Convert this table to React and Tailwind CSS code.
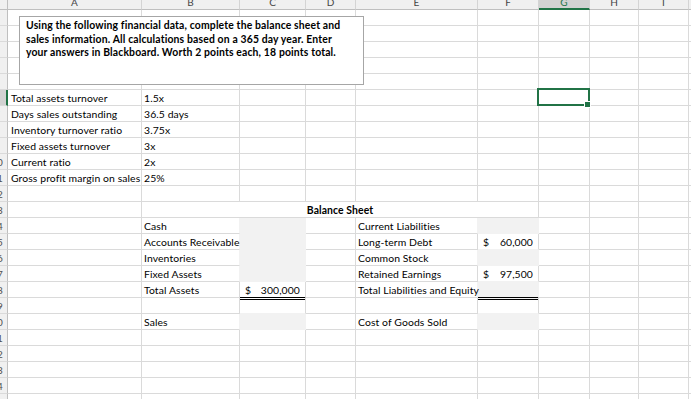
import React from 'react';

const COLS = [
  { k: 'A', w: 'w-[134px]' },
  { k: 'B', w: 'w-[98px]' },
  { k: 'C', w: 'w-[66px]' },
  { k: 'D', w: 'w-[50px]' },
  { k: 'E', w: 'w-[122px]' },
  { k: 'F', w: 'w-[61px]' },
  { k: 'G', w: 'w-[51px]' },
  { k: 'H', w: 'w-[49px]' },
  { k: 'I', w: 'w-[50px]' },
  { k: 'J', w: 'w-[60px]' },
];

const TEXT = {
  A6: 'Total assets turnover',
  B6: '1.5x',
  A7: 'Days sales outstanding',
  B7: '36.5 days',
  A8: 'Inventory turnover ratio',
  B8: '3.75x',
  A9: 'Fixed assets turnover',
  B9: '3x',
  A10: 'Current ratio',
  B10: '2x',
  A11: 'Gross profit margin on sales',
  B11: '25%',
  B14: 'Cash',
  E14: 'Current Liabilities',
  B15: 'Accounts Receivable',
  E15: 'Long-term Debt',
  B16: 'Inventories',
  E16: 'Common Stock',
  B17: 'Fixed Assets',
  E17: 'Retained Earnings',
  B18: 'Total Assets',
  E18: 'Total Liabilities and Equity',
  B20: 'Sales',
  E20: 'Cost of Goods Sold',
};

const MONEY = {
  C18: '300,000',
  F15: '60,000',
  F17: '97,500',
};

const FILLED = new Set(['C14', 'C15', 'C16', 'C17', 'C20', 'F14', 'F16', 'F18', 'F20']);
const DOUBLE = new Set(['C18', 'F18']);
const OVERFLOW = new Set(['A11', 'B15', 'E18']);

const isFilled = (c, r) => FILLED.has(c + r);

function RowHeader({ n, selected }) {
  return (
    <div
      className={
        'shrink-0 w-[8px] h-[16px] box-border border-b border-b-[#dadada] flex justify-end overflow-hidden ' +
        (selected ? 'bg-[#d2d2d2] border-r-2 border-r-[#217346]' : 'bg-[#f0f0f0] border-r border-r-[#bfbfbf]')
      }
    >
      <div className="shrink-0 w-[20px] text-center text-[10px] leading-[16px] text-[#505050]">{n}</div>
    </div>
  );
}

function Row({ r }) {
  const cells = [];
  for (let i = 0; i < COLS.length; i++) {
    const col = COLS[i];
    const key = col.k + r;

    if (r === 13 && col.k === 'B') {
      cells.push(
        <div
          key={key}
          className="shrink-0 w-[397px] h-[16px] box-border border-r border-b border-r-[#dadada] border-b-[#dadada] text-center font-bold text-[10.4px] tracking-[0.1px] leading-[16px] whitespace-nowrap text-black"
        >
          Balance Sheet
        </div>
      );
      continue;
    }
    if (r === 13 && ['C', 'D', 'E', 'F'].includes(col.k)) continue;

    const filled = isFilled(col.k, r);
    const next = COLS[i + 1];
    const rightFilled = filled || (next && isFilled(next.k, r));
    const bottomFilled = filled || isFilled(col.k, r + 1);
    const dbl = DOUBLE.has(key);

    let cls = 'shrink-0 box-border border-r ' + col.w + ' ';
    cls += rightFilled ? 'border-r-[#f2f2f2] ' : 'border-r-[#dadada] ';
    if (dbl) {
      cls += 'h-[18px] border-b-[3px] border-double border-b-black ';
    } else {
      cls += 'h-[16px] border-b ';
      cls += bottomFilled ? 'border-b-[#f2f2f2] ' : 'border-b-[#dadada] ';
    }
    if (filled) cls += 'bg-[#f2f2f2] ';
    if (OVERFLOW.has(key)) cls += 'relative z-10 ';

    let content = null;
    if (TEXT[key]) {
      content = (
        <div
          className={
            'whitespace-nowrap text-[10.4px] tracking-[0.1px] leading-[16px] text-black ' +
            (col.k === 'A' ? 'pl-[3px]' : 'pl-[2px]')
          }
        >
          {TEXT[key]}
        </div>
      );
    } else if (MONEY[key]) {
      content = (
        <div className="flex justify-between whitespace-nowrap text-[10.4px] tracking-[0.1px] leading-[16px] text-black pl-[5px] pr-[5px]">
          <span>$</span>
          <span>{MONEY[key]}</span>
        </div>
      );
    }

    cells.push(
      <div key={key} className={cls}>
        {content}
      </div>
    );
  }
  return (
    <div className="flex h-[16px] items-start">
      <RowHeader n={r} selected={r === 6} />
      {cells}
    </div>
  );
}

export default function App() {
  const rows = [];
  for (let r = 1; r <= 25; r++) rows.push(<Row key={r} r={r} />);

  return (
    <div className="relative w-[691px] h-[399px] overflow-hidden bg-white font-['Lato',sans-serif]">
      {/* column headers */}
      <div className="flex h-[10px]">
        <div className="shrink-0 w-[8px] h-[10px] box-border bg-[#f0f0f0] border-r border-b border-r-[#bfbfbf] border-b-[#bfbfbf]" />
        {COLS.map((c) => (
          <div
            key={c.k}
            className={
              'shrink-0 h-[10px] box-border border-r border-r-[#d4d4d4] overflow-hidden text-center text-[10px] leading-[5px] ' +
              c.w +
              ' ' +
              (c.k === 'G'
                ? 'bg-[#d2d2d2] border-b-2 border-b-[#217346] text-[#217346]'
                : 'bg-[#f0f0f0] border-b border-b-[#bfbfbf] text-[#444444]')
            }
          >
            {c.k}
          </div>
        ))}
      </div>

      {rows}

      {/* text box */}
      <div className="absolute left-[19px] top-[16px] w-[345px] h-[69px] box-border border border-[#a6a6a6] bg-white pl-[6px] pt-[2px]">
        <div className="text-[10.4px] tracking-[0.15px] leading-[13.5px] font-bold text-black whitespace-nowrap">
          Using the following financial data, complete the balance sheet and
          <br />
          sales information. All calculations based on a 365 day year. Enter
          <br />
          your answers in Blackboard. Worth 2 points each, 18 points total.
        </div>
      </div>

      {/* selected cell G6 */}
      <div className="absolute left-[537px] top-[88px] w-[53px] h-[18px] box-border border-2 border-[#217346]" />
      <div className="absolute left-[584px] top-[101px] w-[7px] h-[7px] box-border border border-white bg-[#217346]" />
    </div>
  );
}
